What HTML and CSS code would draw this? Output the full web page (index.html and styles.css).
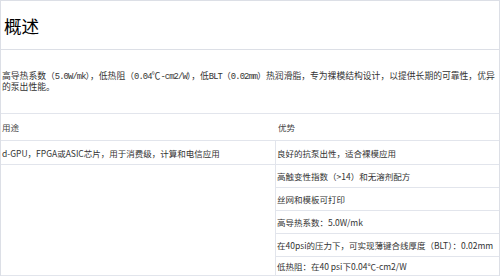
FILE: index.html
```html
<!DOCTYPE html>
<html lang="zh-CN">
<head>
<meta charset="utf-8">
<title>概述</title>
<link rel="stylesheet" href="styles.css">
</head>
<body>
<section class="panel">
  <header class="title"><h2>概述</h2></header>
  <p class="desc"><span class="line">高导热系数（<span class="lat">5.0W/mk</span>），低热阻（<span class="lat">0.04</span>℃<span class="lat">-cm2/W</span>），低<span class="lat">BLT</span>（<span class="lat">0.02mm</span>）热润滑脂，专为裸模结构设计，以提供长期的可靠性，优异</span><span class="line">的泵出性能。</span></p>
  <div class="spec">
    <div class="cell head">用途</div>
    <div class="cell head right-head">优势</div>
    <div class="cell">d-GPU，FPGA或ASIC芯片，用于消费级，计算和电信应用</div>
    <div class="cell right">良好的抗泵出性，适合裸模应用</div>
    <div class="cell empty"></div>
    <div class="cell right">高触变性指数（&gt;14）和无溶剂配方</div>
    <div class="cell right">丝网和模板可打印</div>
    <div class="cell right">高导热系数：5.0W/mk</div>
    <div class="cell right">在40psi的压力下，可实现薄键合线厚度（BLT）：0.02mm</div>
    <div class="cell right last">低热阻：在40 psi下0.04℃-cm2/W</div>
  </div>
</section>
</body>
</html>
```

FILE: styles.css
```css
html, body {
  margin: 0;
  padding: 0;
  background: #fff;
}

body {
  width: 500px;
  height: 277px;
  overflow: hidden;
  font-family: "Noto Sans CJK SC", "Noto Sans", sans-serif;
  color: #333;
}

.panel {
  box-sizing: border-box;
  width: 500px;
  border-top: 1px solid #dcdfe6;
  border-left: 1px solid #dcdfe6;
  border-right: 1px solid #dcdfe6;
}

.title {
  box-sizing: border-box;
  height: 49px;
  border-bottom: 1px solid #dcdfe6;
  display: flex;
  align-items: center;
  padding: 2px 0 0 3px;
}

.title h2 {
  margin: 0;
  font-size: 17.6px;
  line-height: 20px;
  font-weight: normal;
  color: #000;
  font-family: "Noto Sans CJK SC", serif;
}

.desc {
  box-sizing: border-box;
  height: 63px;
  margin: 0;
  padding: 21px 1px 0 1px;
  font-size: 8.8px;
  line-height: 10px;
  color: #333;
}

.line {
  display: block;
  white-space: nowrap;
}

.lat {
  font-family: "Liberation Mono", monospace;
  font-size: 8.8px;
  letter-spacing: -0.88px;
  line-height: 10px;
}

.spec {
  display: grid;
  grid-template-columns: 274px 1fr;
  grid-template-rows: 27px 24px 23px 23px 23px 23px 19px;
  border-top: 1px solid #e2e5ec;
  font-size: 8.5px;
  color: #333;
}

.cell {
  box-sizing: border-box;
  display: flex;
  align-items: center;
  padding-left: 1px;
  border-bottom: 1px solid #e2e5ec;
  white-space: nowrap;
}

.head {
  color: #444;
}

.right-head {
  padding-left: 3px;
}

.right {
  border-left: 1px solid #e2e5ec;
  padding-left: 1px;
}

.empty {
  grid-row: 3 / span 5;
}
```
